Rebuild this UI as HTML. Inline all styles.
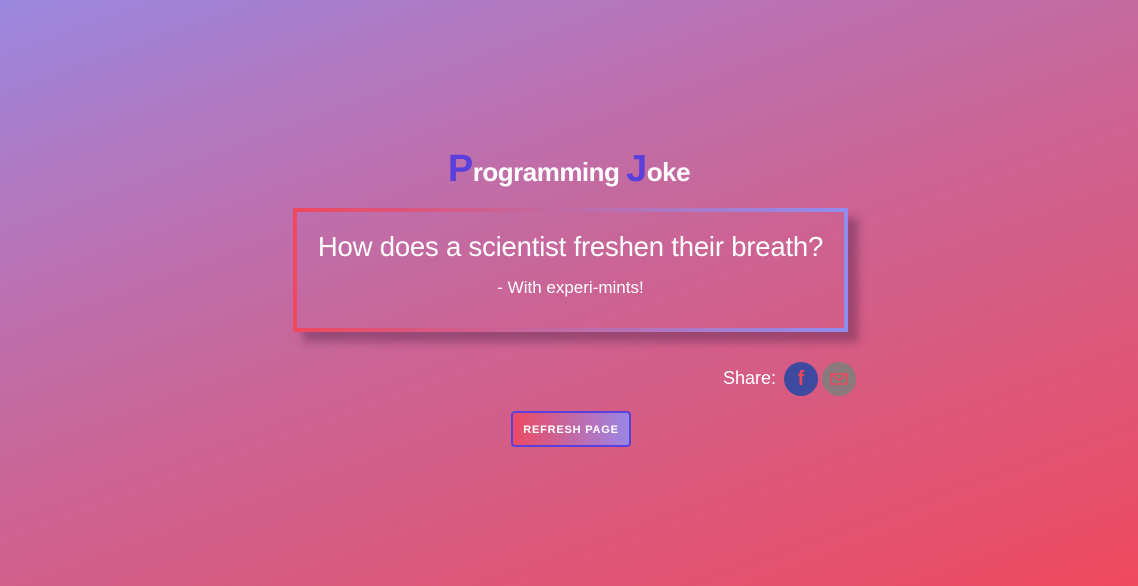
<!DOCTYPE html>
<html><head><meta charset="utf-8"><style>
html,body{margin:0;padding:0}
body{width:1138px;height:586px;overflow:hidden;position:relative;font-family:"Liberation Sans",sans-serif;
background:linear-gradient(160deg,#9a88e0 0%,#b774b8 25%,#cb6494 50%,#dc577a 75%,#ef4a5e 100%);}
h1{position:absolute;top:148px;left:0;width:1138px;text-align:center;margin:0;font-size:26px;font-weight:bold;color:#fff;letter-spacing:-0.5px}
h1 span{color:#5a3fdc;font-size:38px}
.box{position:absolute;left:293px;top:208px;width:547px;height:116px;border:4px solid;border-image:linear-gradient(90deg,#f0485e,#8f8ef0) 1;
box-shadow:10px 10px 8px rgba(90,40,80,0.45);text-align:center;color:#fff}
.q{font-size:27.5px;margin-top:19px;letter-spacing:-0.2px}
.a{font-size:17px;margin-top:15px}
.share{position:absolute;left:723px;top:368px;color:#fff;font-size:18px}
.fb{position:absolute;left:784px;top:362px;width:34px;height:34px;border-radius:50%;background:#3d4aa0;color:#e8485c;font-weight:bold;font-size:20px;text-align:center;line-height:35px}
.ml{position:absolute;left:822px;top:362px;width:34px;height:34px;border-radius:50%;background:#8a7a7e}
.btn{position:absolute;left:511px;top:411px;width:116px;height:32px;border:2px solid #5a3fdc;border-radius:4px;
background:linear-gradient(90deg,#ec4a62,#9a86e6);color:#fff;font-size:11px;font-weight:bold;letter-spacing:0.8px;text-align:center;line-height:35px}
</style></head><body>
<h1><span>P</span>rogramming <span>J</span>oke</h1>
<div class="box"><div class="q">How does a scientist freshen their breath?</div><div class="a">- With experi-mints!</div></div>
<div class="share">Share:</div>
<div class="fb">f</div>
<div class="ml"><svg width="34" height="34" viewBox="0 0 34 34"><rect x="9" y="12" width="16" height="10" fill="none" stroke="#e8485c" stroke-width="1.5"/><path d="M9 12 L17 18 L25 12" fill="none" stroke="#e8485c" stroke-width="1.5"/></svg></div>
<div class="btn">REFRESH PAGE</div>
</body></html>
